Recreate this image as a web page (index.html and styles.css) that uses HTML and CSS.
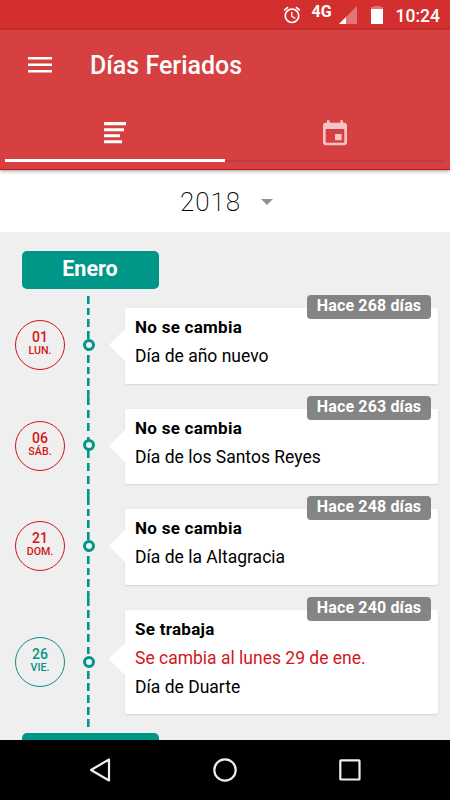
FILE: index.html
```html
<!DOCTYPE html>
<html lang="es">
<head>
    <meta charset="UTF-8">
    <meta name="viewport" content="width=device-width, initial-scale=1.0">
    <title>Días Feriados</title>
    <link rel="stylesheet" href="styles.css">
</head>
<body>
    <div class="status-bar">
        <svg class="alarm" width="20" height="20" viewBox="0 0 24 24" fill="#fff"><path d="M22 5.72l-4.6-3.86-1.29 1.53 4.6 3.86L22 5.72zM7.88 3.39L6.6 1.86 2 5.71l1.29 1.53 4.59-3.85zM12.5 8H11v6l4.75 2.85.75-1.23-4-2.37V8zM12 4c-4.97 0-9 4.03-9 9s4.02 9 9 9c4.97 0 9-4.03 9-9s-4.03-9-9-9zm0 16c-3.87 0-7-3.13-7-7s3.13-7 7-7 7 3.13 7 7-3.13 7-7 7z"/></svg>
        <span class="network">4G</span>
        <svg class="signal" width="18" height="18" viewBox="0 0 18 18"><path d="M0 18L18 0V18z" fill="#e57373"/><path d="M0 18L7 11V18z" fill="#fff"/></svg>
        <svg class="battery" width="12" height="18" viewBox="0 0 12 18"><path d="M3 0h6v1h3v2H0V1h3z" fill="#e57373"/><path d="M0 3h12v15H0z" fill="#fff"/></svg>
        <span class="clock">10:24</span>
    </div>

    <header>
        <div class="toolbar">
            <svg width="24" height="16" viewBox="0 0 24 16" fill="#fff"><path d="M0 0h24v2.4H0zM0 6.5h24v2.4H0zM0 13h24v2.4H0z"/></svg>
            <h1>Días Feriados</h1>
        </div>
        <nav class="tabs">
            <a class="tab active">
                <svg width="24" height="24" viewBox="0 0 24 24" fill="#fff"><path d="M1 1h22v3.2H1zM1 7.2h20v3H1zM1 13.2h16v3H1zM1 19.2h18v3H1z"/></svg>
            </a>
            <a class="tab">
                <svg width="32" height="30" viewBox="0 0 24 24" preserveAspectRatio="none" fill="#f5c5c5"><path d="M17 12h-5v5h5v-5zM16 1v2H8V1H6v2H5c-1.11 0-1.99.9-1.99 2L3 19c0 1.1.89 2 2 2h14c1.1 0 2-.9 2-2V5c0-1.1-.9-2-2-2h-1V1h-2zm3 18H5V8h14v11z"/></svg>
            </a>
        </nav>
    </header>

    <div class="year-bar">
        <span>2018</span>
        <span class="caret"></span>
    </div>

    <main>
        <h2 class="month">Enero</h2>

        <section class="row">
            <div class="date"><b>01</b><span>LUN.</span></div>
            <div class="line line-1"><i class="dot"></i></div>
            <div class="card">
                <span class="badge">Hace 268 días</span>
                <h3>No se cambia</h3>
                <p>Día de año nuevo</p>
            </div>
        </section>

        <section class="row">
            <div class="date"><b>06</b><span>SÁB.</span></div>
            <div class="line line-2"><i class="dot"></i></div>
            <div class="card">
                <span class="badge">Hace 263 días</span>
                <h3>No se cambia</h3>
                <p>Día de los Santos Reyes</p>
            </div>
        </section>

        <section class="row">
            <div class="date"><b>21</b><span>DOM.</span></div>
            <div class="line line-1"><i class="dot"></i></div>
            <div class="card">
                <span class="badge">Hace 248 días</span>
                <h3>No se cambia</h3>
                <p>Día de la Altagracia</p>
            </div>
        </section>

        <section class="row row-tall">
            <div class="date workday"><b>26</b><span>VIE.</span></div>
            <div class="line line-3"><i class="dot"></i></div>
            <div class="card">
                <span class="badge">Hace 240 días</span>
                <h3>Se trabaja</h3>
                <p class="moved">Se cambia al lunes 29 de ene.</p>
                <p>Día de Duarte</p>
            </div>
        </section>

        <div class="month month-next"></div>
    </main>

    <footer class="nav-bar">
        <svg width="24" height="26" viewBox="0 0 24 26"><path d="M21 2.5v21L3 13z"/></svg>
        <svg width="24" height="26" viewBox="0 0 24 26"><circle cx="12" cy="13" r="10.7"/></svg>
        <svg width="24" height="26" viewBox="0 0 24 26"><rect x="2.3" y="3.3" width="19.2" height="19.2" rx="0.6"/></svg>
    </footer>
</body>
</html>
```
FILE: styles.css
```css
* {
    box-sizing: border-box;
}

body {
    font-family: Roboto, sans-serif;
    margin: 0;
    height: 800px;
    display: flex;
    flex-direction: column;
    overflow: hidden;
    background-color: #efefef;
    color: #000;
}

h1, h2, h3, p {
    margin: 0;
}

/* Barra de estado */
.status-bar {
    height: 30px;
    flex: none;
    display: flex;
    align-items: center;
    justify-content: flex-end;
    padding-right: 10px;
    background-color: #d32f2f;
    color: #fff;
}

.network {
    font-size: 16px;
    font-weight: 700;
    line-height: 18px;
    margin: 0 7px 7px 10px;
}

.battery {
    margin: 0 13px 0 14px;
}

.clock {
    font-size: 17.5px;
    font-weight: 500;
    line-height: 32px;
    padding-top: 2px;
}

/* Encabezado */
header {
    height: 140px;
    flex: none;
    position: relative;
    display: flex;
    flex-direction: column;
    background-color: #d64040;
    border-bottom: 1px solid #c9100f;
    box-shadow: 0 1px 4px rgba(0, 0, 0, 0.4);
    color: #fff;
}

.toolbar {
    height: 70px;
    display: flex;
    align-items: center;
    padding-left: 28px;
    gap: 38px;
}

.toolbar h1 {
    font-size: 25px;
    font-weight: 500;
}

.tabs {
    height: 62px;
    display: flex;
    padding: 0 5px;
}

.tab {
    flex: 1;
    display: flex;
    align-items: center;
    justify-content: center;
    padding-top: 7px;
    border-bottom: 2px solid #c63b3b;
}

.tab.active {
    border-bottom: 3px solid #fff;
}

/* Selector de año */
.year-bar {
    height: 62px;
    flex: none;
    display: flex;
    align-items: center;
    justify-content: center;
    gap: 20px;
    padding: 1px 0 0 3px;
    background-color: #fff;
    font-size: 26px;
    font-weight: 200;
    letter-spacing: 1px;
}

.caret {
    border: 6px solid transparent;
    border-top-color: #909090;
    border-bottom: 0;
}

/* Lista de feriados */
main {
    flex: 1;
    min-height: 0;
    overflow: hidden;
    padding: 19px 12px 0 15px;
}

.month {
    width: 137px;
    height: 38px;
    margin: 0 0 7px 6.5px;
    border-radius: 5px;
    background-color: #009688;
    color: #fff;
    font-size: 21.5px;
    font-weight: 700;
    line-height: 36px;
    text-align: center;
}

.month-next {
    margin-top: 6px;
}

.row {
    display: flex;
    align-items: center;
    height: 100.6px;
}

.row-tall {
    height: 129px;
}

.date {
    width: 50px;
    height: 50px;
    padding-top: 9px;
    margin-top: -2px;
    border: 1px solid #d50f14;
    border-radius: 50%;
    color: #d3161b;
    text-align: center;
    line-height: 14px;
}

.date b {
    display: block;
    font-size: 14px;
    font-weight: 500;
}

.date span {
    display: block;
    font-size: 10.7px;
    font-weight: 500;
    line-height: 13px;
}

.date.workday {
    margin-top: 0;
    border-color: #009688;
    color: #009688;
}

.line {
    width: 11px;
    height: 100%;
    margin: 0 36px 0 18px;
    display: flex;
    align-items: center;
    --step: 12px;
    background: repeating-linear-gradient(#009688 0 7.8px, transparent 7.8px var(--step)) center / 2.6px 100% no-repeat;
}

.line-1 {
    --step: 11.8px;
}

.line-2 {
    --step: 13.2px;
}

.line-3 {
    --step: 12.15px;
}

.dot {
    width: 12px;
    height: 12px;
    flex: none;
    margin-top: -3px;
    border: 3px solid #009688;
    border-radius: 50%;
    background-color: #efefef;
}

.line-3 .dot {
    margin-top: -1px;
}

.card {
    flex: 1;
    align-self: stretch;
    position: relative;
    margin: 12px 0 13px -5px;
    padding: 5px 10px;
    border-radius: 2px;
    background-color: #fff;
    box-shadow: 0 1px 2px rgba(0, 0, 0, 0.12);
    font-size: 17.5px;
    line-height: 29px;
}

.card::before {
    content: "";
    position: absolute;
    top: 21px;
    left: -16px;
    border: 16px solid transparent;
    border-left-width: 0;
    border-right-color: #fff;
}

.row-tall .card::before {
    top: 33px;
}

.card h3 {
    font-size: 17px;
    font-weight: 700;
    letter-spacing: 0.27px;
}

.card .moved {
    color: #d3161b;
}

.badge {
    position: absolute;
    top: -13px;
    right: 7px;
    width: 124px;
    height: 24px;
    border-radius: 4px;
    background-color: rgba(112, 112, 112, 0.85);
    color: #fff;
    font-size: 16px;
    font-weight: 700;
    line-height: 22px;
    letter-spacing: 0.15px;
    text-align: center;
}

/* Barra de navegación */
.nav-bar {
    height: 60px;
    flex: none;
    display: flex;
    align-items: center;
    justify-content: center;
    gap: 101px;
    background-color: #000;
}

.nav-bar svg {
    fill: none;
    stroke: #eee;
    stroke-width: 2.2;
    stroke-linejoin: round;
}
```
